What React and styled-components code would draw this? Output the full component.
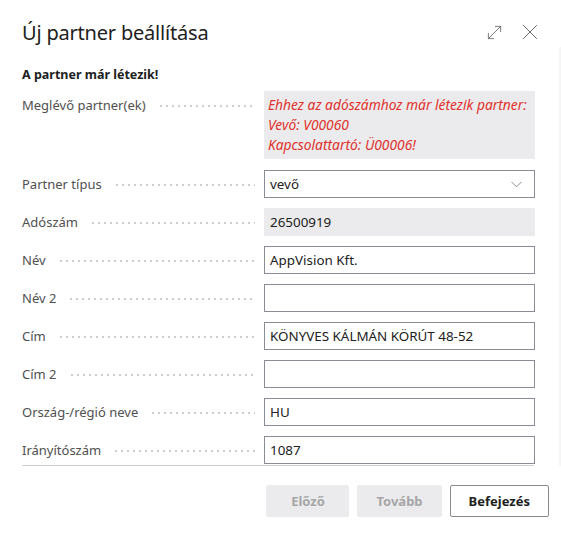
import React from 'react'
import styled, { createGlobalStyle } from 'styled-components'
import { MoveDiagonal, X, ChevronDown } from 'lucide-react'

const GlobalStyle = createGlobalStyle`
  html, body {
    margin: 0;
    padding: 0;
    background: #fff;
  }
  body {
    font-family: 'Noto Sans', 'Open Sans', sans-serif;
    color: #212121;
  }
`

const fields = [
  { label: 'Partner típus', value: 'vevő', kind: 'select' },
  { label: 'Adószám', value: '26500919', kind: 'readonly' },
  { label: 'Név', value: 'AppVision Kft.' },
  { label: 'Név 2', value: '' },
  { label: 'Cím', value: 'KÖNYVES KÁLMÁN KÖRÚT 48-52' },
  { label: 'Cím 2', value: '' },
  { label: 'Ország-/régió neve', value: 'HU' },
  { label: 'Irányítószám', value: '1087' },
]

const App = () => {
  return (
    <>
      <GlobalStyle />
      <Dialog>
        <Header>
          <Title>Új partner beállítása</Title>
          <HeaderActions>
            <IconButton aria-label='Teljes méret'>
              <MoveDiagonal size={21} strokeWidth={0.9} />
            </IconButton>
            <IconButton aria-label='Bezárás'>
              <X size={28} strokeWidth={0.85} />
            </IconButton>
          </HeaderActions>
        </Header>

        <Content>
          <Notice>A partner már létezik!</Notice>
          <Form>
            <Row>
              <Label><span>Meglévő partner(ek)</span><Leader /></Label>
              <Warning>
                Ehhez az adószámhoz már létezik partner:<br />
                Vevő: V00060<br />
                Kapcsolattartó: Ü00006!
              </Warning>
            </Row>
            {fields.map((f) => (
              <Row key={f.label}>
                <Label><span>{f.label}</span><Leader /></Label>
                <Field $kind={f.kind}>
                  <span>{f.value}</span>
                  {f.kind === 'select' && (
                    <Chevron><ChevronDown size={19} strokeWidth={0.9} /></Chevron>
                  )}
                </Field>
              </Row>
            ))}
          </Form>
        </Content>

        <Footer>
          <Button disabled>Előző</Button>
          <Button disabled>Tovább</Button>
          <Button $primary>Befejezés</Button>
        </Footer>
      </Dialog>
    </>
  )
}

export default App

const Dialog = styled.div`
  width: 561px;
  height: 538px;
  box-sizing: border-box;
  display: flex;
  flex-direction: column;
  background: #fff;
`

const Header = styled.div`
  display: flex;
  align-items: center;
  justify-content: space-between;
  padding: 17px 18px 0 22px;
  height: 30px;
`

const Title = styled.h1`
  margin: 0;
  font-size: 20px;
  font-weight: 400;
  color: #212121;
  letter-spacing: -0.2px;
`

const HeaderActions = styled.div`
  display: flex;
  align-items: center;
  gap: 10px;
`

const IconButton = styled.button`
  border: none;
  background: none;
  padding: 0;
  width: 26px;
  height: 26px;
  display: flex;
  align-items: center;
  justify-content: center;
  color: #5c5c5c;
  cursor: pointer;
`

const Content = styled.div`
  padding: 19px 25px 0 22px;
  border-right: 2px solid #f5f5f6;
`

const Notice = styled.div`
  font-size: 12.5px;
  font-weight: 700;
  line-height: 18px;
  color: #212121;
  margin-bottom: 7px;
`

const Form = styled.div`
  display: flex;
  flex-direction: column;
  gap: 10px;
  padding-bottom: 1px;
  border-bottom: 1px solid #cfcfcf;
`

const Row = styled.div`
  display: grid;
  grid-template-columns: 242px 271px;
  align-items: start;
`

const Label = styled.div`
  display: flex;
  align-items: center;
  padding: 5px 9px 0 0;
  font-size: 13px;
  line-height: 18px;
  color: #505050;
  white-space: nowrap;

  span {
    flex: none;
  }
`

const Leader = styled.i`
  flex: 1;
  height: 2px;
  margin: 2px 0 0 12px;
  background-image: radial-gradient(circle, #cccccc 0.7px, transparent 1px);
  background-size: 6px 2px;
  background-repeat: repeat-x;
`

const Warning = styled.div`
  background: #ebebed;
  color: #e0312c;
  font-style: italic;
  font-size: 13.8px;
  line-height: 20px;
  padding: 4px 2px 4px 4px;
  margin-bottom: 1px;
  white-space: nowrap;
`

const Field = styled.div`
  box-sizing: border-box;
  height: 28px;
  display: flex;
  align-items: center;
  justify-content: space-between;
  padding: 0 8px 0 5px;
  font-size: 13.4px;
  color: #212121;
  background: ${(p) => (p.$kind === 'readonly' ? '#ebebed' : '#fff')};
  border: 1px solid ${(p) => (p.$kind === 'readonly' ? '#ebebed' : '#8a8d96')};
`

const Chevron = styled.span`
  display: flex;
  color: #5f6270;
`

const Footer = styled.div`
  display: flex;
  justify-content: flex-end;
  gap: 8px;
  padding: 19px 12px 0 0;
`

const Button = styled.button`
  height: 32px;
  min-width: 83px;
  padding: 0 18px;
  font-family: inherit;
  font-size: 13px;
  font-weight: 700;
  border-radius: 2px;
  border: 1px solid ${(p) => (p.$primary ? '#888a90' : '#ebebed')};
  background: ${(p) => (p.$primary ? '#fff' : '#ebebed')};
  color: ${(p) => (p.$primary ? '#212121' : '#a6a6a6')};
`
